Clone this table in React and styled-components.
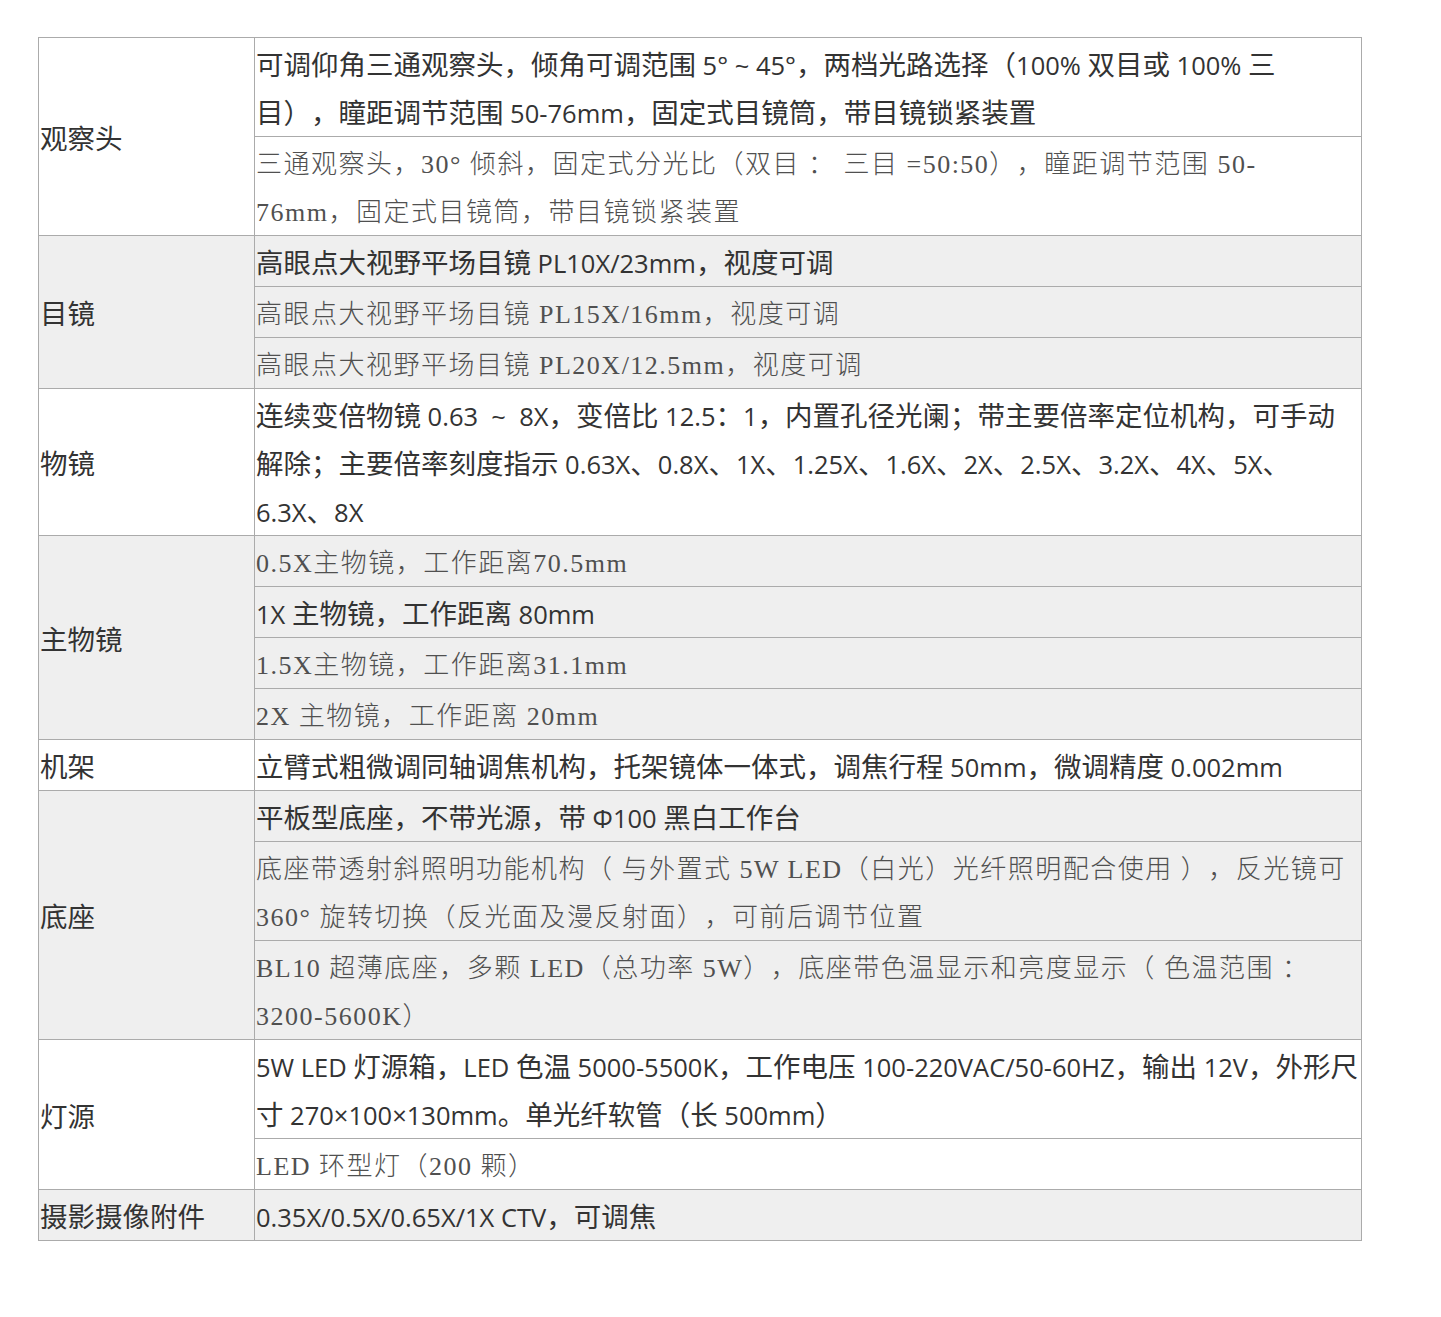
import React from "react";
import styled, { createGlobalStyle } from "styled-components";

const GlobalStyle = createGlobalStyle`
  html, body { margin: 0; padding: 0; background: #ffffff; }
  body { margin: 8px; font-family: "Noto Sans CJK SC", sans-serif; }
`;

const Page = styled.div`
  padding: 29px 30px 60px 30px;
`;

const Table = styled.table`
  width: 1323px;
  border-collapse: collapse;
  table-layout: fixed;
  border: 1px solid #ababab;
`;

const Col = styled.col`
  width: ${(p) => p.$w}px;
`;

const Row = styled.tr`
  background: ${(p) => (p.$shaded ? "#efefef" : "#ffffff")};
`;

const LabelCell = styled.td`
  border: 1px solid #ababab;
  padding: 1px;
  vertical-align: middle;
  font-family: "Noto Sans CJK SC", sans-serif;
  font-size: 27.5px;
  line-height: 48px;
  color: #333333;
  white-space: nowrap;
  text-spacing-trim: space-all;
`;

const Cell = styled.td`
  border: 1px solid #ababab;
  padding: 1px;
  vertical-align: middle;
  line-height: 48px;
  text-spacing-trim: space-all;
  font-family: "Noto Sans CJK SC", sans-serif;
  font-size: ${(p) => (p.$serif ? "26px" : "27.5px")};
  letter-spacing: ${(p) => (p.$serif ? "1.5px" : "0")};
  font-weight: ${(p) => (p.$serif ? 300 : 400)};
  color: ${(p) => (p.$serif ? "#505050" : "#333333")};
`;

const Line = styled.div`
  height: 48px;
  white-space: pre;
`;

const Han = styled.span`
  line-height: 1;
`;

const Latin = styled.span`
  font-family: ${(p) =>
    p.$serif
      ? `"Liberation Serif", serif`
      : `"Open Sans", "Noto Sans", sans-serif`};
  font-size: ${(p) => (p.$serif ? "26px" : "25.5px")};
  font-weight: 400;
  line-height: 1;
  letter-spacing: ${(p) => (p.$serif ? "1.5px" : "0")};
`;

const LATIN_RUN = /([\u0020-\u00FF\u03A6]+)/;

function Mixed({ text, serif }) {
  return text.split("\n").map((line, li) => (
    <Line key={li}>
      {line.split(LATIN_RUN).map((part, i) =>
        part === "" ? null : i % 2 === 1 ? (
          <Latin key={i} $serif={serif}>
            {part}
          </Latin>
        ) : (
          <Han key={i}>{part}</Han>
        )
      )}
    </Line>
  ));
}

const groups = [
  {
    label: "观察头",
    rows: [
      {
        t: "可调仰角三通观察头，倾角可调范围 5° ~ 45°，两档光路选择（100% 双目或 100% 三\n目），瞳距调节范围 50-76mm，固定式目镜筒，带目镜锁紧装置",
      },
      {
        serif: true,
        t: "三通观察头，30° 倾斜，固定式分光比（双目 ： 三目 =50:50），瞳距调节范围 50-\n76mm，固定式目镜筒，带目镜锁紧装置",
      },
    ],
  },
  {
    label: "目镜",
    rows: [
      { t: "高眼点大视野平场目镜 PL10X/23mm，视度可调" },
      { serif: true, t: "高眼点大视野平场目镜 PL15X/16mm，视度可调" },
      { serif: true, t: "高眼点大视野平场目镜 PL20X/12.5mm，视度可调" },
    ],
  },
  {
    label: "物镜",
    rows: [
      {
        t: "连续变倍物镜 0.63  ~  8X，变倍比 12.5：1，内置孔径光阑；带主要倍率定位机构，可手动\n解除；主要倍率刻度指示 0.63X、0.8X、1X、1.25X、1.6X、2X、2.5X、3.2X、4X、5X、\n6.3X、8X",
      },
    ],
  },
  {
    label: "主物镜",
    rows: [
      { serif: true, t: "0.5X主物镜，工作距离70.5mm" },
      { t: "1X 主物镜，工作距离 80mm" },
      { serif: true, t: "1.5X主物镜，工作距离31.1mm" },
      { serif: true, t: "2X 主物镜，工作距离 20mm" },
    ],
  },
  {
    label: "机架",
    rows: [
      {
        t: "立臂式粗微调同轴调焦机构，托架镜体一体式，调焦行程 50mm，微调精度 0.002mm",
      },
    ],
  },
  {
    label: "底座",
    rows: [
      { t: "平板型底座，不带光源，带 Φ100 黑白工作台" },
      {
        serif: true,
        t: "底座带透射斜照明功能机构（ 与外置式 5W LED（白光）光纤照明配合使用 ），反光镜可\n360° 旋转切换（反光面及漫反射面），可前后调节位置",
      },
      {
        serif: true,
        t: "BL10 超薄底座，多颗 LED（总功率 5W），底座带色温显示和亮度显示（ 色温范围 ：\n3200-5600K）",
      },
    ],
  },
  {
    label: "灯源",
    rows: [
      {
        t: "5W LED 灯源箱，LED 色温 5000-5500K，工作电压 100-220VAC/50-60HZ，输出 12V，外形尺\n寸 270×100×130mm。单光纤软管（长 500mm）",
      },
      { serif: true, t: "LED 环型灯（200 颗）" },
    ],
  },
  {
    label: "摄影摄像附件",
    rows: [{ t: "0.35X/0.5X/0.65X/1X CTV，可调焦" }],
  },
];

export default function App() {
  return (
    <>
      <GlobalStyle />
      <Page>
        <Table>
          <colgroup>
            <Col $w={216} />
            <Col $w={1107} />
          </colgroup>
          <tbody>
            {groups.map((g, gi) =>
              g.rows.map((r, ri) => (
                <Row key={`${gi}-${ri}`} $shaded={gi % 2 === 1}>
                  {ri === 0 && (
                    <LabelCell rowSpan={g.rows.length}>{g.label}</LabelCell>
                  )}
                  <Cell $serif={!!r.serif}>
                    <Mixed text={r.t} serif={!!r.serif} />
                  </Cell>
                </Row>
              ))
            )}
          </tbody>
        </Table>
      </Page>
    </>
  );
}
